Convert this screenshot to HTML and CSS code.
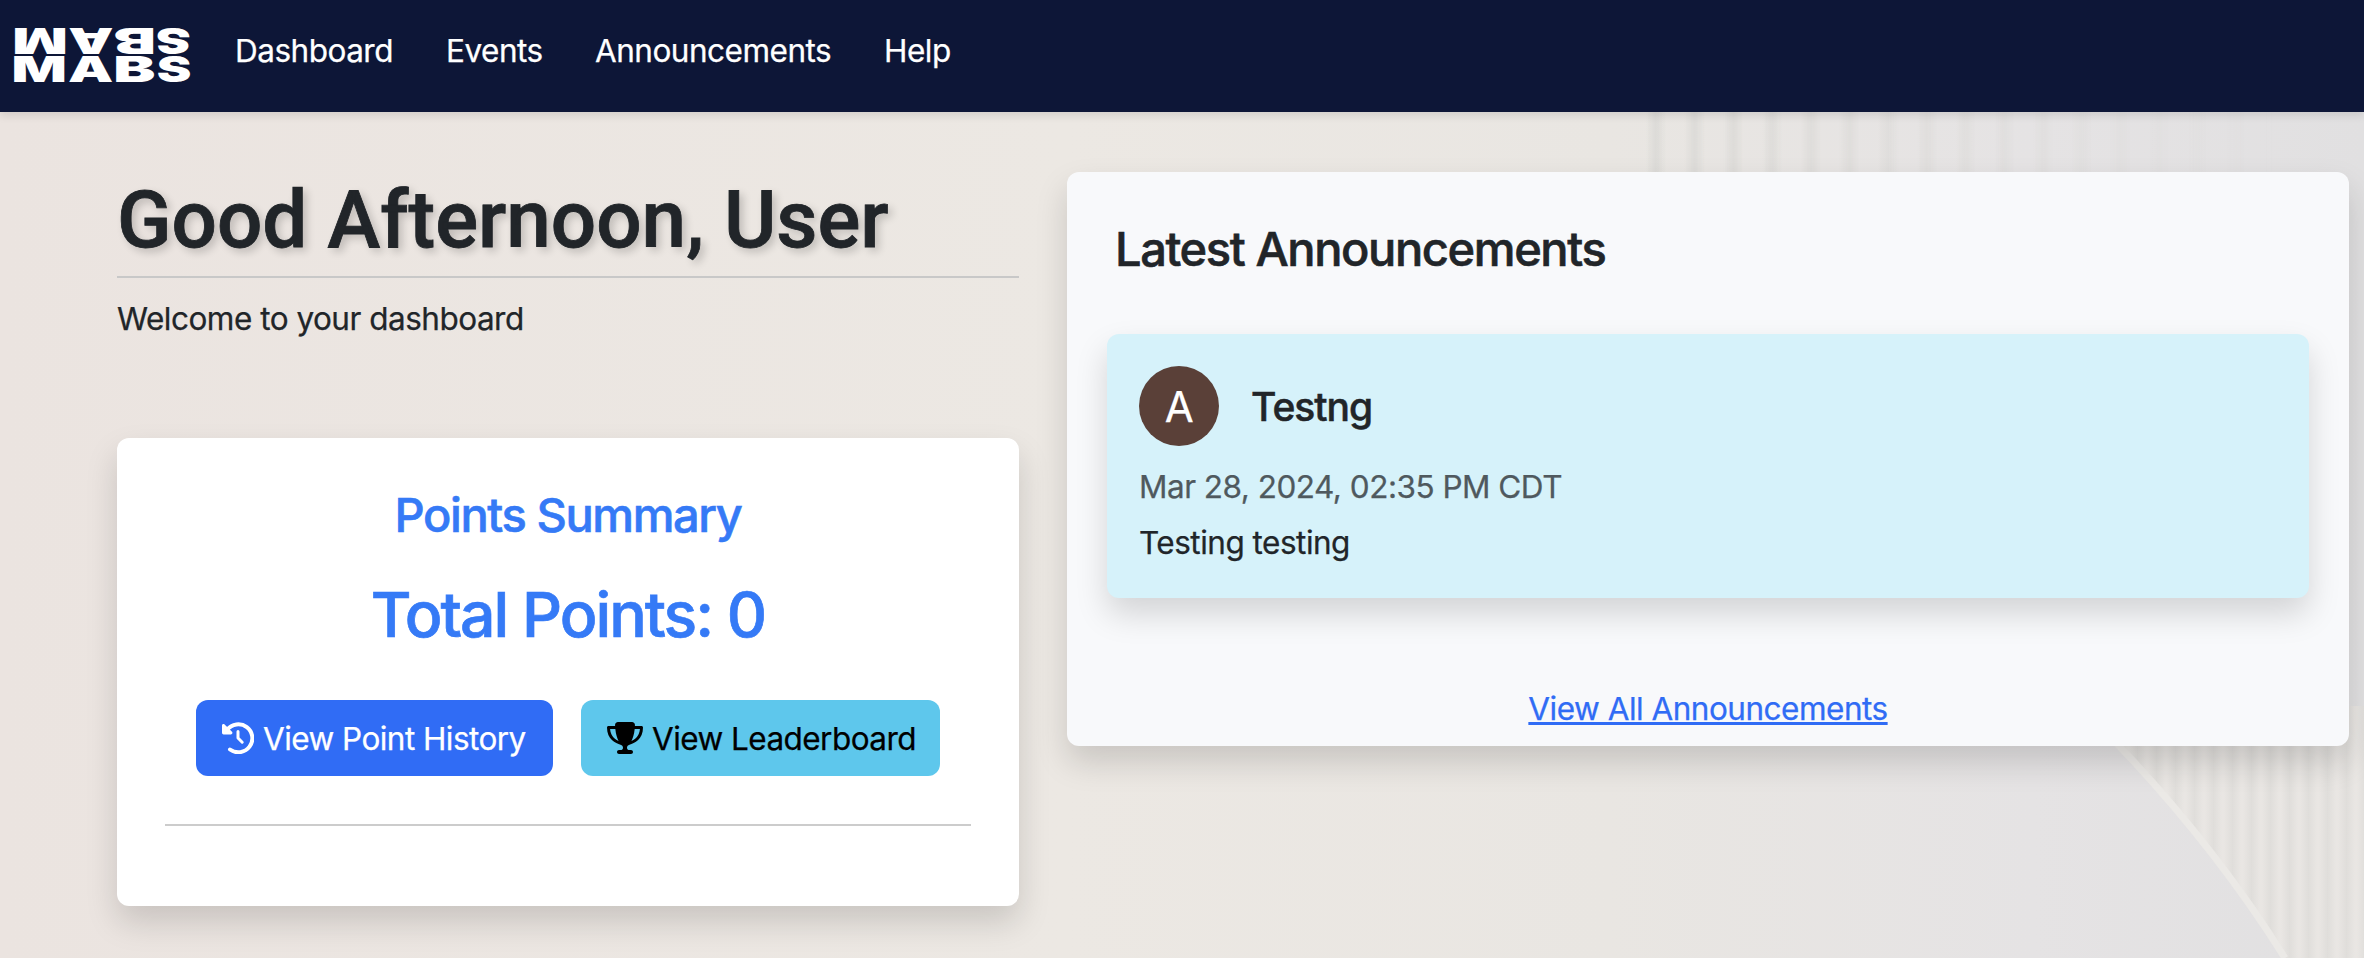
FILE: index.html
```html
<!DOCTYPE html>
<html lang="en">
<head>
<meta charset="utf-8">
<title>MABS Dashboard</title>
<link rel="stylesheet" href="styles.css">
</head>
<body>
<svg class="backdrop" viewBox="0 0 2364 958" aria-hidden="true">
  <defs>
    <linearGradient id="base" x1="0" x2="1" y1="0" y2="0">
      <stop offset="0" stop-color="#ebe4e0"/><stop offset=".45" stop-color="#ece8e3"/>
      <stop offset=".68" stop-color="#e9e6e2"/><stop offset=".86" stop-color="#e5e3e4"/><stop offset="1" stop-color="#e1e0e1"/>
    </linearGradient>
    <linearGradient id="rib" x1="0" x2="1"><stop offset="0" stop-color="#d8d7d4" stop-opacity="0"/><stop offset=".5" stop-color="#d8d7d4"/><stop offset="1" stop-color="#d8d7d4" stop-opacity="0"/></linearGradient>
    <pattern id="ribs" x="1646" y="0" width="38.7" height="200" patternUnits="userSpaceOnUse"><rect width="20" height="200" fill="url(#rib)" opacity=".8"/></pattern>
    <pattern id="slats" x="2148" y="0" width="19" height="958" patternUnits="userSpaceOnUse"><rect width="19" height="958" fill="#e9e6e3"/><rect width="17" height="958" fill="url(#rib)" opacity=".55"/></pattern>
    <linearGradient id="fade"><stop offset="0" stop-color="#fff"/><stop offset=".5" stop-color="#777"/><stop offset=".88" stop-color="#000"/></linearGradient>
    <mask id="fademask"><rect x="1646" y="0" width="718" height="200" fill="url(#fade)"/></mask>
  </defs>
  <rect width="2364" height="958" fill="url(#base)"/>
  <rect x="1646" y="100" width="718" height="80" fill="url(#ribs)" mask="url(#fademask)"/>
  <path d="M2080 706Q2203 827 2285 958H2364V706Z" fill="url(#slats)"/>
  <path d="M2080 706Q2203 827 2285 958" fill="none" stroke="#ebe9e6" stroke-width="7"/>
</svg>
<nav class="navbar">
  <svg class="logo" viewBox="0 0 180 60" role="img" aria-label="MABS">
    <g class="logo-row">
      <text transform="translate(-2.4 56) scale(1.61 1)">M</text>
      <text transform="translate(54.1 56) scale(1.583 1)">A</text>
      <text transform="translate(99.3 56) scale(1.753 1)">B</text>
      <text transform="translate(142.7 56) scale(1.444 1)">S</text>
    </g>
    <g class="logo-row">
      <text transform="translate(53.7 1.7) scale(-1.61 -1)">M</text>
      <text transform="translate(99.6 1.7) scale(-1.583 -1)">A</text>
      <text transform="translate(142 1.7) scale(-1.753 -1)">B</text>
      <text transform="translate(176.8 1.7) scale(-1.444 -1)">S</text>
    </g>
  </svg>
  <a class="nav-link dash">Dashboard</a>
  <a class="nav-link events">Events</a>
  <a class="nav-link announce">Announcements</a>
  <a class="nav-link">Help</a>
</nav>
<main class="content">
  <section class="left">
    <h1 class="greeting">Good Afternoon, User</h1>
    <p class="welcome">Welcome to your dashboard</p>
    <div class="points">
      <h2 class="points-title">Points Summary</h2>
      <p class="points-total">Total Points: 0</p>
      <div class="actions">
        <a class="btn history"><svg class="icon" viewBox="0 0 16 16"><g fill="none" stroke="currentColor" stroke-width="2" stroke-linecap="round" stroke-linejoin="round"><path d="M2.6 3.9A7 7 0 1 1 4 13.75"/><path d="M8 4.75V8l2.1 2.1" stroke-width="1.5"/></g><path d="M0 1.7C0 1 .8.7 1.3 1.2L5 4.9c.5.5.1 1.3-.5 1.3H.8A.8.8 0 0 1 0 5.4z" fill="currentColor"/></svg><span class="label">View Point History</span></a>
        <a class="btn leader"><svg class="icon trophy" viewBox="0 0 576 512"><path fill="currentColor" d="M400 0H176c-26.500 0-48.100 21.800-47.100 48.200.2 5.300.4 10.600.7 15.800H24C10.700 64 0 74.700 0 88c0 92.600 33.500 157 78.500 200.700 44.300 43.100 98.300 64.800 138.100 75.800 23.400 6.500 39.400 26 39.400 45.600 0 20.900-17 37.900-37.900 37.900H192c-17.700 0-32 14.300-32 32s14.300 32 32 32h192c17.700 0 32-14.300 32-32s-14.300-32-32-32h-26.100c-20.900 0-37.900-17-37.900-37.900 0-19.600 15.900-39.200 39.400-45.600 39.900-11 93.900-32.700 138.200-75.800C542.500 245 576 180.600 576 88c0-13.300-10.700-24-24-24H446.400c.3-5.200.5-10.400.7-15.800C448.100 21.800 426.500 0 400 0zM48.900 112h84.400c9.100 90.100 29.200 150.300 51.900 190.600-24.900-11-50.800-26.500-73.200-48.300-32-31.100-58-76-63-142.300zm415.300 142.300c-22.400 21.800-48.300 37.300-73.200 48.300 22.700-40.300 42.800-100.500 51.900-190.600h84.400c-5.100 66.300-31.100 111.200-63 142.300z"/></svg><span class="label">View Leaderboard</span></a>
      </div>
      <div class="rule"></div>
    </div>
  </section>
  <section class="news">
    <h2 class="news-title">Latest Announcements</h2>
    <article class="item">
      <header class="item-head"><span class="avatar">A</span><h3 class="item-title">Testng</h3></header>
      <p class="date">Mar 28, 2024, 02:35 PM CDT</p>
      <p class="body">Testing testing</p>
    </article>
    <a class="all">View All Announcements</a>
  </section>
</main>
</body>
</html>
```
FILE: styles.css
```css
* { box-sizing: border-box; margin: 0; }
body { position: relative; width: 2364px; height: 958px; overflow: hidden; font: 400 31.5px/48px Inter, sans-serif; letter-spacing: -.5px; color: #212529; white-space: nowrap; -webkit-text-stroke: .25px currentColor; }
.backdrop { position: absolute; inset: 0; z-index: -1; width: 2364px; height: 958px; }
.navbar { display: flex; align-items: flex-start; height: 112px; padding: 26px 14px; background: #0d1637; color: #fff; box-shadow: 0 4px 8px rgba(0,0,0,.1); }
.logo { width: 180px; height: 60px; margin-right: 41px; overflow: visible; -webkit-text-stroke: 0; }
.logo-row { font: 900 36px Inter, sans-serif; letter-spacing: 0; fill: #fff; }
.nav-link { margin-right: 52px; padding-top: 1px; }
.dash { width: 159px; }
.events { width: 97px; }
.announce { width: 237px; }
.content { display: flex; align-items: flex-start; gap: 48px; padding: 60px 15px 0 117px; }
.left { width: 902px; }
.greeting { height: 106px; border-bottom: 2px solid #c8c8c8; font: 500 80px/96px Roboto, sans-serif; letter-spacing: 0; text-shadow: 4px 4px 8px rgba(0,0,0,.2); -webkit-text-stroke: .8px currentColor; }
.welcome { margin: 17px 0 95px; }
.points { height: 468px; padding: 48px; border-radius: 12px; background: #fff; box-shadow: 0 16px 32px rgba(0,0,0,.15); text-align: center; }
.points-title { font: 500 47px/58px Inter, sans-serif; letter-spacing: -1.4px; color: #357af6; -webkit-text-stroke: .6px currentColor; }
.points-total { margin: 32px 0 47px; font: 500 62.5px/77px Inter, sans-serif; letter-spacing: -2px; color: #357af6; -webkit-text-stroke: .7px currentColor; }
.actions { display: flex; justify-content: center; gap: 28px; }
.btn { display: flex; align-items: center; gap: 9px; height: 76px; padding: 0 0 0 26px; border-radius: 12px; }
.label { padding-top: 2px; letter-spacing: -.55px; }
.history { width: 357px; background: #306cf5; color: #fff; }
.leader { width: 359px; background: #5ec7ec; color: #000; }
.icon { width: 32px; height: 32px; flex: none; }
.trophy { width: 36px; }
.rule { height: 2px; margin-top: 48px; background: #ccc; }
.news { flex: 1; display: flex; flex-direction: column; height: 574px; padding: 48px 40px 0; border-radius: 12px; background: #f8f9fb; box-shadow: 0 16px 32px rgba(0,0,0,.15); }
.news-title { margin: 0 8px 56px; font: 500 47px/58px Inter, sans-serif; letter-spacing: -1.4px; -webkit-text-stroke: .6px currentColor; }
.item { height: 264px; padding: 32px; border-radius: 12px; background: #d6f2fa; box-shadow: 0 16px 32px rgba(0,0,0,.15); }
.item-head { display: flex; align-items: center; gap: 32px; }
.avatar { width: 80px; height: 80px; border-radius: 50%; background: #5a4038; color: #fff; font-size: 42px; line-height: 82px; text-align: center; }
.item-title { padding-top: 2px; font: 500 39px/48px Inter, sans-serif; letter-spacing: -1px; -webkit-text-stroke: .5px currentColor; }
.date { margin: 17px 0 8px; color: #4f595e; }
.all { align-self: center; margin-top: 87px; color: #306cf5; text-decoration: underline; text-decoration-thickness: 3px; text-underline-offset: 2px; text-decoration-skip-ink: none; }
```
